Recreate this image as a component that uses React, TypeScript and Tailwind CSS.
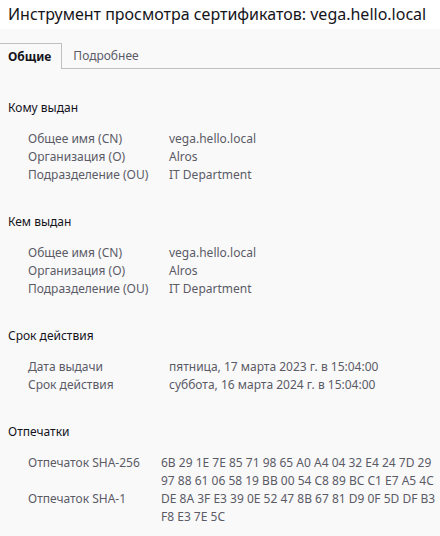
const sections = [
  {
    title: "Кому выдан",
    labelWidth: "w-[141px]",
    rows: [
      ["Общее имя (CN)", "vega.hello.local"],
      ["Организация (O)", "Alros"],
      ["Подразделение (OU)", "IT Department"],
    ],
  },
  {
    title: "Кем выдан",
    labelWidth: "w-[141px]",
    rows: [
      ["Общее имя (CN)", "vega.hello.local"],
      ["Организация (O)", "Alros"],
      ["Подразделение (OU)", "IT Department"],
    ],
  },
  {
    title: "Срок действия",
    labelWidth: "w-[141px]",
    rows: [
      ["Дата выдачи", "пятница, 17 марта 2023 г. в 15:04:00"],
      ["Срок действия", "суббота, 16 марта 2024 г. в 15:04:00"],
    ],
  },
  {
    title: "Отпечатки",
    labelWidth: "w-[133px]",
    rows: [
      [
        "Отпечаток SHA-256",
        "6B 29 1E 7E 85 71 98 65 A0 A4 04 32 E4 24 7D 29 97 88 61 06 58 19 BB 00 54 C8 89 BC C1 E7 A5 4C",
      ],
      ["Отпечаток SHA-1", "DE 8A 3F E3 39 0E 52 47 8B 67 81 D9 0F 5D DF B3 F8 E3 7E 5C"],
    ],
  },
];

export default function App() {
  return (
    <div className="w-[440px] h-[536px] overflow-hidden bg-[#f9f9fa] font-['Noto_Sans',sans-serif] text-[12px]">
      <div className="h-[29px] bg-white px-2 text-[16px] leading-[29px] text-[#15141a]">
        Инструмент просмотра сертификатов: vega.hello.local
      </div>

      <div className="mt-[14px] flex border-b border-[#c0c0c4]">
        <div className="h-[26px] border-t border-r border-[#c0c0c4] pl-2 pr-[10px] font-bold leading-[25px] text-[#15141a] -mb-px bg-[#f9f9fa]">
          Общие
        </div>
        <div className="h-[25px] px-[11px] leading-[25px] text-[#5b5b66]">Подробнее</div>
      </div>

      <div className="pl-2 pt-[30px]">
        {sections.map((s, i) => (
          <div key={i} className="mb-[29px]">
            <h2 className="text-[12px] leading-[18px] text-[#15141a]">{s.title}</h2>
            <div className="mt-[13px] pl-5">
              {s.rows.map(([label, value], j) => (
                <div key={j} className="flex leading-[18px] text-[#5b5b66]">
                  <div className={`${s.labelWidth} shrink-0`}>{label}</div>
                  <div className="w-[279px]">{value}</div>
                </div>
              ))}
            </div>
          </div>
        ))}
      </div>
    </div>
  );
}
